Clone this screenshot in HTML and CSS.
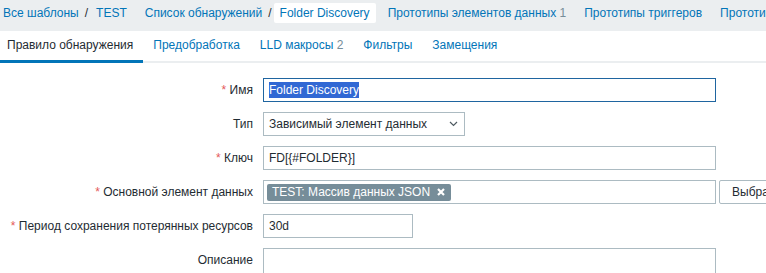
FILE: index.html
```html
<!DOCTYPE html>
<html lang="ru">
<head>
    <meta charset="UTF-8">
    <meta name="viewport" content="width=device-width, initial-scale=1.0">
    <title>Folder Discovery</title>
    <link rel="stylesheet" href="styles.css">
</head>
<body>
    <nav class="crumbs">
        <div class="crumb-group">
            <a class="crumb first" href="#">Все шаблоны</a><span class="sep">/</span><a class="crumb" href="#">TEST</a>
        </div>
        <div class="crumb-group">
            <a class="crumb" href="#">Список обнаружений</a><span class="sep">/</span><span class="crumb active">Folder Discovery</span>
        </div>
        <div class="crumb-group">
            <a class="crumb" href="#">Прототипы элементов данных <span class="count">1</span></a>
        </div>
        <div class="crumb-group">
            <a class="crumb" href="#">Прототипы триггеров</a>
        </div>
        <div class="crumb-group">
            <a class="crumb" href="#">Прототипы графиков</a>
        </div>
    </nav>

    <ul class="tabs">
        <li class="tab first active">Правило обнаружения</li>
        <li class="tab">Предобработка</li>
        <li class="tab">LLD макросы <span class="count">2</span></li>
        <li class="tab">Фильтры</li>
        <li class="tab">Замещения</li>
    </ul>

    <form class="form-grid">
        <label class="form-label"><span class="req">*</span> Имя</label>
        <div class="field">
            <div class="textbox wide focused"><span class="selected">Folder Discovery</span></div>
        </div>

        <label class="form-label">Тип</label>
        <div class="field">
            <div class="textbox select">
                <span>Зависимый элемент данных</span>
                <svg class="chevron" width="9" height="6" viewBox="0 0 9 6"><polyline points="1,1 4.5,4.5 8,1" fill="none" stroke="#4f5b62" stroke-width="1.2"/></svg>
            </div>
        </div>

        <label class="form-label"><span class="req">*</span> Ключ</label>
        <div class="field">
            <div class="textbox wide">FD[{#FOLDER}]</div>
        </div>

        <label class="form-label"><span class="req">*</span> Основной элемент данных</label>
        <div class="field">
            <div class="textbox wide multiselect">
                <span class="tag">TEST: Массив данных JSON
                    <svg class="tag-x" width="8" height="8" viewBox="0 0 8 8"><path d="M1 1L7 7M7 1L1 7" stroke="#fff" stroke-width="2.2"/></svg>
                </span>
            </div>
            <button type="button" class="btn-alt">Выбрать</button>
        </div>

        <label class="form-label"><span class="req">*</span> Период сохранения потерянных ресурсов</label>
        <div class="field">
            <div class="textbox short">30d</div>
        </div>

        <label class="form-label">Описание</label>
        <div class="field">
            <div class="textbox wide textarea"></div>
        </div>
    </form>
</body>
</html>
```

FILE: styles.css
```css
/* Zabbix-like discovery rule form */
body {
    margin: 0;
    height: 273px;
    font-family: "Liberation Sans", Arial, sans-serif;
    font-size: 12px;
    color: #1f2c33;
    background-color: #ffffff;
    overflow: hidden;
}

a {
    color: #0275b8;
    text-decoration: none;
}

.count {
    color: #768d99;
}

/* Breadcrumbs bar */
.crumbs {
    display: flex;
    gap: 6px;
    height: 31px;
    padding-top: 3px;
    box-sizing: border-box;
    background-color: #ebeef0;
    white-space: nowrap;
    overflow: hidden;
}

.crumb-group {
    display: flex;
    align-items: center;
    height: 20px;
}

.crumb {
    padding: 0 6px;
    line-height: 20px;
}

.crumb.first {
    padding-left: 3px;
}

.crumb.active {
    background-color: #ffffff;
    color: #0275b8;
    border-radius: 2px;
}

.sep {
    color: #1f2c33;
    margin: 0 2px 0 0;
}

/* Tabs */
.tabs {
    display: flex;
    margin: 0;
    padding: 0;
    list-style: none;
    border-bottom: 2px solid #ebeef0;
    white-space: nowrap;
}

.tab {
    padding: 0 10px;
    line-height: 29px;
    color: #0275b8;
    border-bottom: 3px solid transparent;
    margin-bottom: -2px;
}

.tab.first {
    padding-left: 7px;
}

.tab.active {
    color: #1f2c33;
    border-bottom-color: #0275b8;
}

/* Form */
.form-grid {
    display: grid;
    grid-template-columns: 253px 1fr;
    column-gap: 10px;
    row-gap: 10px;
    padding-top: 15px;
}

.form-label {
    text-align: right;
    line-height: 24px;
    white-space: nowrap;
}

.req {
    color: #e45959;
}

.field {
    display: flex;
    align-items: flex-start;
}

.textbox {
    box-sizing: border-box;
    height: 24px;
    line-height: 22px;
    padding: 0 5px;
    border: 1px solid #acbbc2;
    background-color: #ffffff;
    white-space: nowrap;
    overflow: hidden;
}

.wide {
    width: 453px;
}

.short {
    width: 150px;
}

.focused {
    border-color: #1f65a0;
}

.selected {
    background-color: #3168d4;
    color: #ffffff;
    padding: 1px 0;
}

.select {
    width: 202px;
    display: flex;
    align-items: center;
    justify-content: space-between;
    padding-right: 6px;
}

.chevron {
    display: block;
}

.multiselect {
    display: flex;
    align-items: center;
    padding: 0 3px;
}

.tag {
    display: inline-flex;
    align-items: center;
    height: 17px;
    line-height: 17px;
    padding: 0 6px 0 5px;
    background-color: #768d99;
    color: #ffffff;
    border-radius: 2px;
}

.tag-x {
    margin-left: 7px;
}

.btn-alt {
    height: 24px;
    margin-left: 3px;
    padding: 0 12px;
    border: 1px solid #acbbc2;
    border-radius: 2px;
    background-color: #ffffff;
    color: #1f2c33;
    font-family: inherit;
    font-size: 12px;
    white-space: nowrap;
}

.textarea {
    height: 52px;
}
```
